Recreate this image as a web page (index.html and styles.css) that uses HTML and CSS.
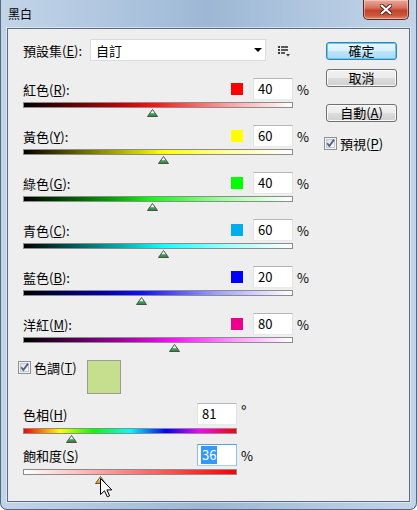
FILE: index.html
```html
<!DOCTYPE html>
<html lang="zh-Hant">
<head>
    <title>黑白</title>
    <meta charset="utf-8">
    <link rel="stylesheet" href="styles.css">
</head>
<body>
<svg class="defs" width="0" height="0">
    <defs>
        <linearGradient id="thumb-green" x1="0" y1="0" x2="0" y2="1">
            <stop offset="0" stop-color="#ffffff"/>
            <stop offset="0.45" stop-color="#e8f4ea"/>
            <stop offset="0.6" stop-color="#3fa553"/>
            <stop offset="1" stop-color="#1f8a36"/>
        </linearGradient>
        <linearGradient id="thumb-orange" x1="0" y1="0" x2="0" y2="1">
            <stop offset="0" stop-color="#fffbe8"/>
            <stop offset="0.45" stop-color="#ffe7a6"/>
            <stop offset="0.6" stop-color="#f4b13a"/>
            <stop offset="1" stop-color="#e08f12"/>
        </linearGradient>
        <linearGradient id="check-bg" x1="0" y1="0" x2="1" y2="1">
            <stop offset="0" stop-color="#dcdcdc"/>
            <stop offset="1" stop-color="#ffffff"/>
        </linearGradient>
    </defs>
</svg>
<div class="window">
    <div class="title-bar">
        <span class="title">黑白</span>
        <div class="close-btn">
            <svg width="12" height="11" viewBox="0 0 12 11">
                <path d="M1.5 1.5 L10.5 9.5 M10.5 1.5 L1.5 9.5" stroke="#4a2320" stroke-width="4" stroke-linecap="round"/>
                <path d="M1.5 1.5 L10.5 9.5 M10.5 1.5 L1.5 9.5" stroke="#ffffff" stroke-width="2" stroke-linecap="round"/>
            </svg>
        </div>
    </div>
    <div class="client">
        <div class="left">
            <div class="preset-row">
                <label class="preset-label">預設集(<u>E</u>):</label>
                <div class="select">
                    <span>自訂</span>
                    <svg width="8" height="4" viewBox="0 0 8 4"><path d="M0 0 L8 0 L4 4 Z" fill="#000"/></svg>
                </div>
                <svg class="preset-menu" width="13" height="11" viewBox="0 0 13 11">
                    <rect x="0" y="0" width="2" height="2" fill="#3a3a3a"/>
                    <rect x="3" y="0" width="7" height="2" fill="#5a5a5a"/>
                    <rect x="0" y="3" width="2" height="2" fill="#3a3a3a"/>
                    <rect x="3" y="3" width="7" height="2" fill="#5a5a5a"/>
                    <rect x="0" y="6" width="2" height="2" fill="#3a3a3a"/>
                    <rect x="3" y="6" width="4" height="2" fill="#5a5a5a"/>
                    <path d="M8 8 L12 8 L10 10.5 Z" fill="#3a3a3a"/>
                </svg>
            </div>

            <div class="channels">
                <div class="channel">
                    <div class="channel-head">
                        <span class="channel-label">紅色(<u>R</u>):</span>
                        <span class="swatch swatch-red"></span>
                        <span class="num">40</span>
                        <span class="unit">%</span>
                    </div>
                    <div class="track track-red"></div>
                    <svg class="thumb" style="margin-left: 124px" width="11" height="8" viewBox="0 0 11 8"><path d="M5.5 0.5 L10.5 7.5 L0.5 7.5 Z" fill="url(#thumb-green)" stroke="#4d4d4d"/></svg>
                </div>
                <div class="channel">
                    <div class="channel-head">
                        <span class="channel-label">黃色(<u>Y</u>):</span>
                        <span class="swatch swatch-yellow"></span>
                        <span class="num">60</span>
                        <span class="unit">%</span>
                    </div>
                    <div class="track track-yellow"></div>
                    <svg class="thumb" style="margin-left: 135px" width="11" height="8" viewBox="0 0 11 8"><path d="M5.5 0.5 L10.5 7.5 L0.5 7.5 Z" fill="url(#thumb-green)" stroke="#4d4d4d"/></svg>
                </div>
                <div class="channel">
                    <div class="channel-head">
                        <span class="channel-label">綠色(<u>G</u>):</span>
                        <span class="swatch swatch-green"></span>
                        <span class="num">40</span>
                        <span class="unit">%</span>
                    </div>
                    <div class="track track-green"></div>
                    <svg class="thumb" style="margin-left: 124px" width="11" height="8" viewBox="0 0 11 8"><path d="M5.5 0.5 L10.5 7.5 L0.5 7.5 Z" fill="url(#thumb-green)" stroke="#4d4d4d"/></svg>
                </div>
                <div class="channel">
                    <div class="channel-head">
                        <span class="channel-label">青色(<u>C</u>):</span>
                        <span class="swatch swatch-cyan"></span>
                        <span class="num">60</span>
                        <span class="unit">%</span>
                    </div>
                    <div class="track track-cyan"></div>
                    <svg class="thumb" style="margin-left: 135px" width="11" height="8" viewBox="0 0 11 8"><path d="M5.5 0.5 L10.5 7.5 L0.5 7.5 Z" fill="url(#thumb-green)" stroke="#4d4d4d"/></svg>
                </div>
                <div class="channel">
                    <div class="channel-head">
                        <span class="channel-label">藍色(<u>B</u>):</span>
                        <span class="swatch swatch-blue"></span>
                        <span class="num">20</span>
                        <span class="unit">%</span>
                    </div>
                    <div class="track track-blue"></div>
                    <svg class="thumb" style="margin-left: 113px" width="11" height="8" viewBox="0 0 11 8"><path d="M5.5 0.5 L10.5 7.5 L0.5 7.5 Z" fill="url(#thumb-green)" stroke="#4d4d4d"/></svg>
                </div>
                <div class="channel">
                    <div class="channel-head">
                        <span class="channel-label">洋紅(<u>M</u>):</span>
                        <span class="swatch swatch-magenta"></span>
                        <span class="num">80</span>
                        <span class="unit">%</span>
                    </div>
                    <div class="track track-magenta"></div>
                    <svg class="thumb" style="margin-left: 146px" width="11" height="8" viewBox="0 0 11 8"><path d="M5.5 0.5 L10.5 7.5 L0.5 7.5 Z" fill="url(#thumb-green)" stroke="#4d4d4d"/></svg>
                </div>
            </div>

            <div class="tint-row">
                <div class="tint-check">
                    <svg class="checkbox" width="13" height="13" viewBox="0 0 13 13">
                        <rect x="0.5" y="0.5" width="12" height="12" fill="#f4f4f4" stroke="#8e8f8f"/>
                        <rect x="2.5" y="2.5" width="8" height="8" fill="url(#check-bg)" stroke="#c6c6c6"/>
                        <path d="M3.2 6.2 L5.4 9 L10 2.6" fill="none" stroke="#4a5f94" stroke-width="1.8"/>
                    </svg>
                    <span>色調(<u>T</u>)</span>
                </div>
                <div class="tint-swatch"></div>
            </div>

            <div class="hs">
                <div class="channel-head">
                    <span class="channel-label">色相(<u>H</u>)</span>
                    <span class="num">81</span>
                    <span class="unit unit-deg">°</span>
                </div>
                <div class="track track-hue"></div>
                <svg class="thumb" style="margin-left: 43px" width="11" height="8" viewBox="0 0 11 8"><path d="M5.5 0.5 L10.5 7.5 L0.5 7.5 Z" fill="url(#thumb-green)" stroke="#4d4d4d"/></svg>
            </div>
            <div class="hs hs-sat">
                <div class="channel-head">
                    <span class="channel-label">飽和度(<u>S</u>)</span>
                    <span class="num num-focus"><span class="selected">36</span></span>
                    <span class="unit">%</span>
                </div>
                <div class="track track-sat"></div>
                <div class="sat-thumb">
                    <svg class="thumb" style="margin-left: 72px" width="11" height="8" viewBox="0 0 11 8"><path d="M5.5 0.5 L10.5 7.5 L0.5 7.5 Z" fill="url(#thumb-orange)" stroke="#6e5426"/></svg>
                    <svg class="pointer" width="13" height="20" viewBox="0 0 13 20">
                        <path d="M0.5 0.5 L0.5 16.5 L4.5 12.8 L7.3 18.8 L9.6 17.8 L6.9 11.9 L11.8 11.9 Z" fill="#ffffff" stroke="#000000" stroke-linejoin="round"/>
                    </svg>
                </div>
            </div>
        </div>

        <div class="right">
            <div class="btn btn-default">確定</div>
            <div class="btn btn-cancel">取消</div>
            <div class="btn btn-auto">自動(<u>A</u>)</div>
            <div class="preview">
                <svg class="checkbox" width="13" height="13" viewBox="0 0 13 13">
                    <rect x="0.5" y="0.5" width="12" height="12" fill="#f4f4f4" stroke="#8e8f8f"/>
                    <rect x="2.5" y="2.5" width="8" height="8" fill="url(#check-bg)" stroke="#c6c6c6"/>
                    <path d="M3.2 6.2 L5.4 9 L10 2.6" fill="none" stroke="#4a5f94" stroke-width="1.8"/>
                </svg>
                <span>預視(<u>P</u>)</span>
            </div>
        </div>
    </div>
</div>
</body>
</html>
```

FILE: styles.css
```css
* {
    box-sizing: border-box;
}

body {
    margin: 0;
    font-family: "Noto Sans CJK TC", "Noto Sans", sans-serif;
    font-size: 13px;
    color: #000;
}

.defs {
    display: block;
    width: 0;
    height: 0;
}

u {
    text-underline-offset: 1px;
}

/* window frame */
.window {
    width: 417px;
    height: 510px;
    border: 1px solid #56697f;
    border-top: none;
    border-radius: 0 0 7px 7px;
    background: linear-gradient(to right, #c2d4e8 0%, #b1c7e0 25%, #9db7d4 50%, #b1c7e0 75%, #c2d4e8 100%);
}

.title-bar {
    height: 28px;
    display: flex;
    justify-content: space-between;
    align-items: flex-start;
    padding: 0 7px 0 7px;
}

.title {
    font-size: 12px;
    line-height: 12px;
    margin-top: 8px;
}

.close-btn {
    width: 46px;
    height: 20px;
    border: 1px solid #5b2a24;
    border-top: none;
    border-radius: 0 0 5px 5px;
    background: linear-gradient(#e9aa9c 0%, #d7735f 40%, #c5432b 55%, #c9563b 80%, #d98a6e 100%);
    box-shadow: inset 0 0 0 1px rgba(255, 230, 220, 0.45);
    display: flex;
    align-items: center;
    justify-content: center;
}

.client {
    height: 474px;
    margin: 0 6px;
    border: 1px solid #5d6d80;
    box-shadow: 0 0 0 1px rgba(255, 255, 255, 0.45);
    background: #eeeeee;
    display: flex;
    padding: 10px 0 0 15px;
}

.left {
    width: 286px;
}

/* preset */
.preset-row {
    display: flex;
    align-items: center;
    height: 22px;
}

.preset-label {
    width: 67px;
}

.select {
    width: 176px;
    height: 22px;
    background: #fff;
    border: 1px solid #d9dbe0;
    display: flex;
    align-items: center;
    justify-content: space-between;
    padding: 0 3px 0 5px;
}

.preset-menu {
    margin-left: 12px;
    margin-top: 2px;
}

/* channels */
.channels {
    padding-top: 17px;
}

.channel {
    margin-bottom: 8px;
}

.channel-head {
    display: flex;
    align-items: center;
    height: 22px;
}

.channel-label {
    flex: 1;
}

.swatch {
    width: 12px;
    height: 12px;
    margin-right: 10px;
}

.swatch-red { background: #ff0000; }
.swatch-yellow { background: #ffff00; }
.swatch-green { background: #00ff00; }
.swatch-cyan { background: #00aeef; }
.swatch-blue { background: #0000ff; }
.swatch-magenta { background: #ec008c; }

.num {
    width: 40px;
    height: 22px;
    background: #fff;
    border: 1px solid;
    border-color: #b4b6bc #dfe3e8 #e6e9ee #dfe3e8;
    padding-left: 4px;
    line-height: 20px;
    font-size: 13px;
}

.num-focus {
    border-color: #5b9fe0 #8cbdea #a9cdef #8cbdea;
    padding-top: 1px;
    line-height: 18px;
}

.selected {
    display: inline-block;
    background: #3399ff;
    color: #fff;
    padding: 0 1px;
    margin-left: -1px;
}

.unit {
    width: 16px;
    padding-left: 4px;
}

.unit-deg {
    align-self: flex-start;
    font-size: 15px;
    line-height: 16px;
}

.track {
    height: 6px;
    width: 270px;
    margin-top: 2px;
    border: 1px solid #8c8c8c;
}

.track-red { background: linear-gradient(to right, #000 0%, #c00000 35%, #ff1010 48%, #ff9a9a 75%, #fff 100%); }
.track-yellow { background: linear-gradient(to right, #000 0%, #a0a000 33%, #ffff00 52%, #ffffa0 76%, #fff 100%); }
.track-green { background: linear-gradient(to right, #000 0%, #00b000 35%, #10ff10 48%, #a0ffa0 75%, #fff 100%); }
.track-cyan { background: linear-gradient(to right, #000 0%, #00a8a8 35%, #10ffff 52%, #a0ffff 76%, #fff 100%); }
.track-blue { background: linear-gradient(to right, #000 0%, #0000b0 30%, #1010ff 44%, #a0a0ff 72%, #fff 100%); }
.track-magenta { background: linear-gradient(to right, #000 0%, #b000b0 40%, #ff10ff 56%, #ffa0ff 80%, #fff 100%); }

.thumb {
    display: block;
    margin-top: 1px;
}

/* tint */
.tint-row {
    display: flex;
    align-items: flex-start;
    height: 34px;
    margin-top: 1px;
    margin-left: -5px;
}

.tint-check {
    width: 69px;
    height: 14px;
    display: flex;
    align-items: center;
    gap: 3px;
}

.checkbox {
    flex-shrink: 0;
}

.tint-swatch {
    width: 34px;
    height: 34px;
    background: #c6df8f;
    border: 1px solid #9a9a9a;
}

/* hue and saturation */
.hs {
    width: 230px;
    margin-top: 9px;
}

.hs-sat {
    margin-top: 1px;
}

.hs .track {
    width: 214px;
    margin-top: 3px;
}

.track-hue {
    background: linear-gradient(to right, #f00 0%, #ff0 17%, #0f0 33%, #0ff 50%, #00f 67%, #f0f 83%, #f00 100%);
}

.track-sat {
    background: linear-gradient(to right, #fff 0%, #ff0000 100%);
}

.sat-thumb {
    position: relative;
    margin-top: 1px;
}

.pointer {
    position: absolute;
    left: 77px;
    top: 2px;
}

/* buttons */
.right {
    width: 71px;
    margin-left: 17px;
    padding-top: 3px;
}

.btn {
    height: 18px;
    border: 1px solid #707070;
    border-radius: 3px;
    background: linear-gradient(#f2f2f2 0%, #ebebeb 50%, #dddddd 51%, #cfcfcf 100%);
    box-shadow: inset 0 0 0 1px #fbfbfb;
    display: flex;
    align-items: center;
    justify-content: center;
    line-height: 16px;
}

.btn-default {
    border-color: #3c7fb1;
    background: linear-gradient(#eaf6fd 0%, #d9f0fc 50%, #bee6fd 51%, #a7d9f5 100%);
    box-shadow: inset 0 0 0 1px #5ccdf5;
}

.btn-cancel {
    margin-top: 9px;
}

.btn-auto {
    margin-top: 17px;
}

.preview {
    margin-top: 15px;
    margin-left: -2px;
    display: flex;
    align-items: center;
    gap: 3px;
    height: 13px;
}
```
